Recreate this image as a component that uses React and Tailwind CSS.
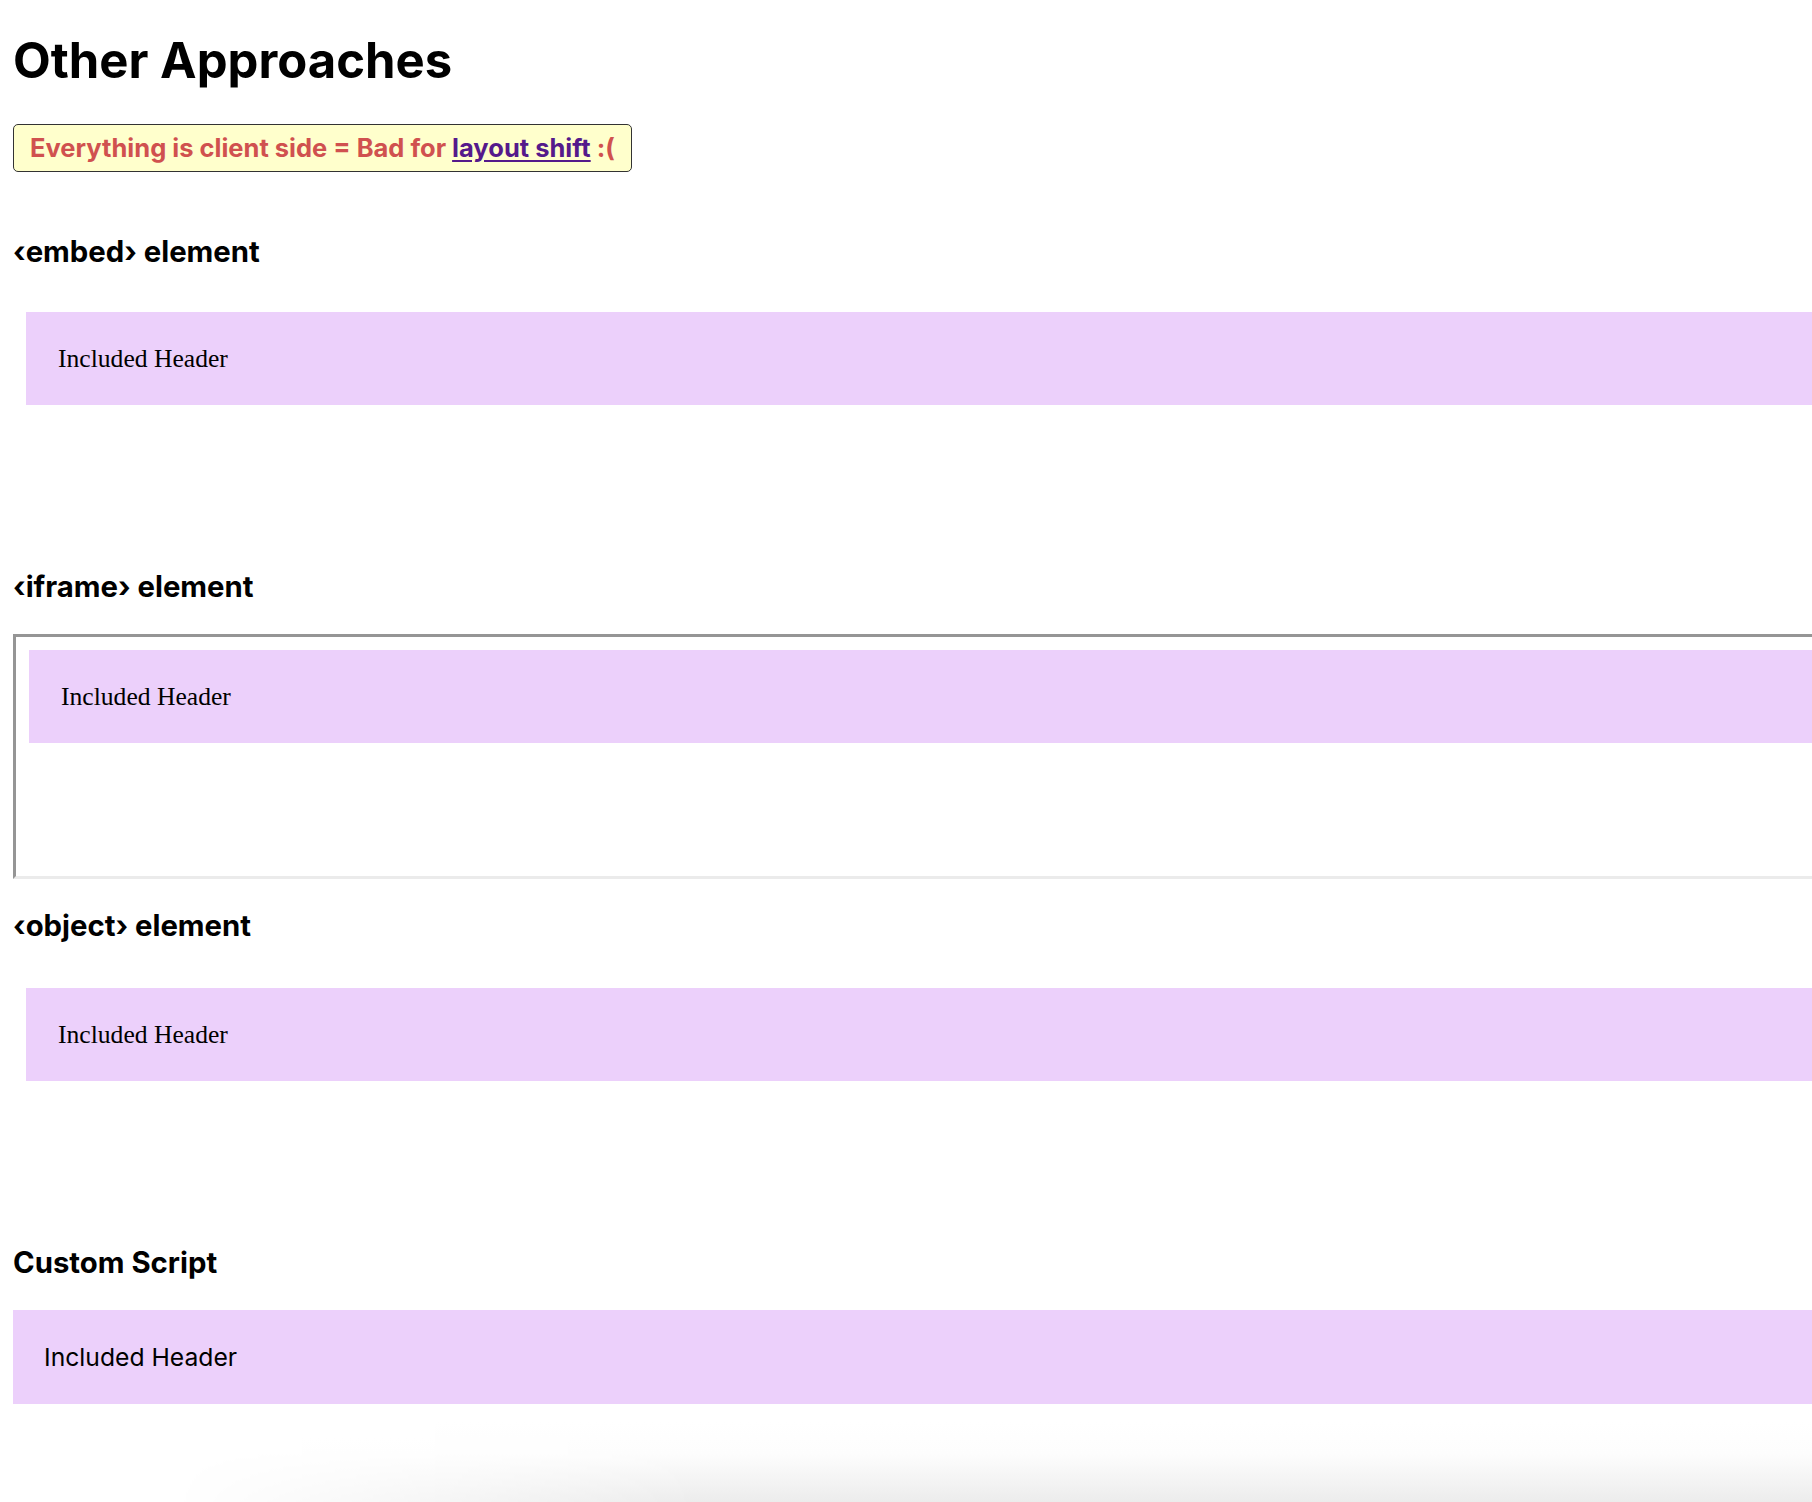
import React from 'react'

function IncludedHeader({ serif = true }) {
  return (
    <div className={`bg-[#ecd0fb] text-black ${serif ? "font-['Liberation_Serif',serif] text-[25.6px] leading-[29px] pl-[32px] pt-[32px] pb-[32px]" : "font-['Inter',sans-serif] text-[24.7px] leading-[29px] pt-[33px] pb-[32px] pl-[31px]"}`}>
      Included Header
    </div>
  )
}

function SectionTitle({ children, className }) {
  return (
    <h3 className={`text-[29.3px] leading-[34px] font-bold ${className}`}>{children}</h3>
  )
}

export default function App() {
  return (
    <div className="min-h-[1502px] w-full overflow-hidden bg-white font-['Inter',sans-serif] text-black flex flex-col">
      <div className="pl-[13px]">
        {/* Title */}
        <h1 className="mt-[32px] text-[49px] leading-[58px] font-bold">Other Approaches</h1>
        <div className="mt-[34px]">
          <p className="inline-block rounded-[5px] border border-[#333] bg-[#ffffcc] px-4 py-2 text-[25.5px] leading-[30px] font-bold text-[#d0514f]">
            Everything is client side = Bad for{' '}
            <a href="#" className="text-[#551a8b] underline underline-offset-[3px]">layout shift</a> :(
          </p>
        </div>

        {/* EMBED */}
        <SectionTitle className="mt-[63px] mb-[31px]">‹embed› element</SectionTitle>
        <div className="h-[238px] pl-[13px] pt-[12px]">
          <IncludedHeader />
        </div>

        {/* IFRAME */}
        <SectionTitle className="mt-[32px] mb-[30px]">‹iframe› element</SectionTitle>
        <div className="h-[245px] border-[3px] border-r-0 border-t-[#959595] border-l-[#959595] border-b-[#ebebeb] pl-[13px] pt-[13px]">
          <IncludedHeader />
        </div>

        {/* OBJECT */}
        <SectionTitle className="mt-[30px] mb-[33px]">‹object› element</SectionTitle>
        <div className="h-[238px] pl-[13px] pt-[12px]">
          <IncludedHeader />
        </div>

        {/* CUSTOM SCRIPT */}
        <SectionTitle className="mt-[32px] mb-[30px]">Custom Script</SectionTitle>
        <IncludedHeader serif={false} />
      </div>
      {/* bottom window shadow */}
      <div className="mt-auto h-[80px] bg-[linear-gradient(to_bottom,#ffffff,#fdfdfd_40%,#ececec)] [mask-image:linear-gradient(to_right,transparent_170px,black_700px)]"></div>
    </div>
  )
}
